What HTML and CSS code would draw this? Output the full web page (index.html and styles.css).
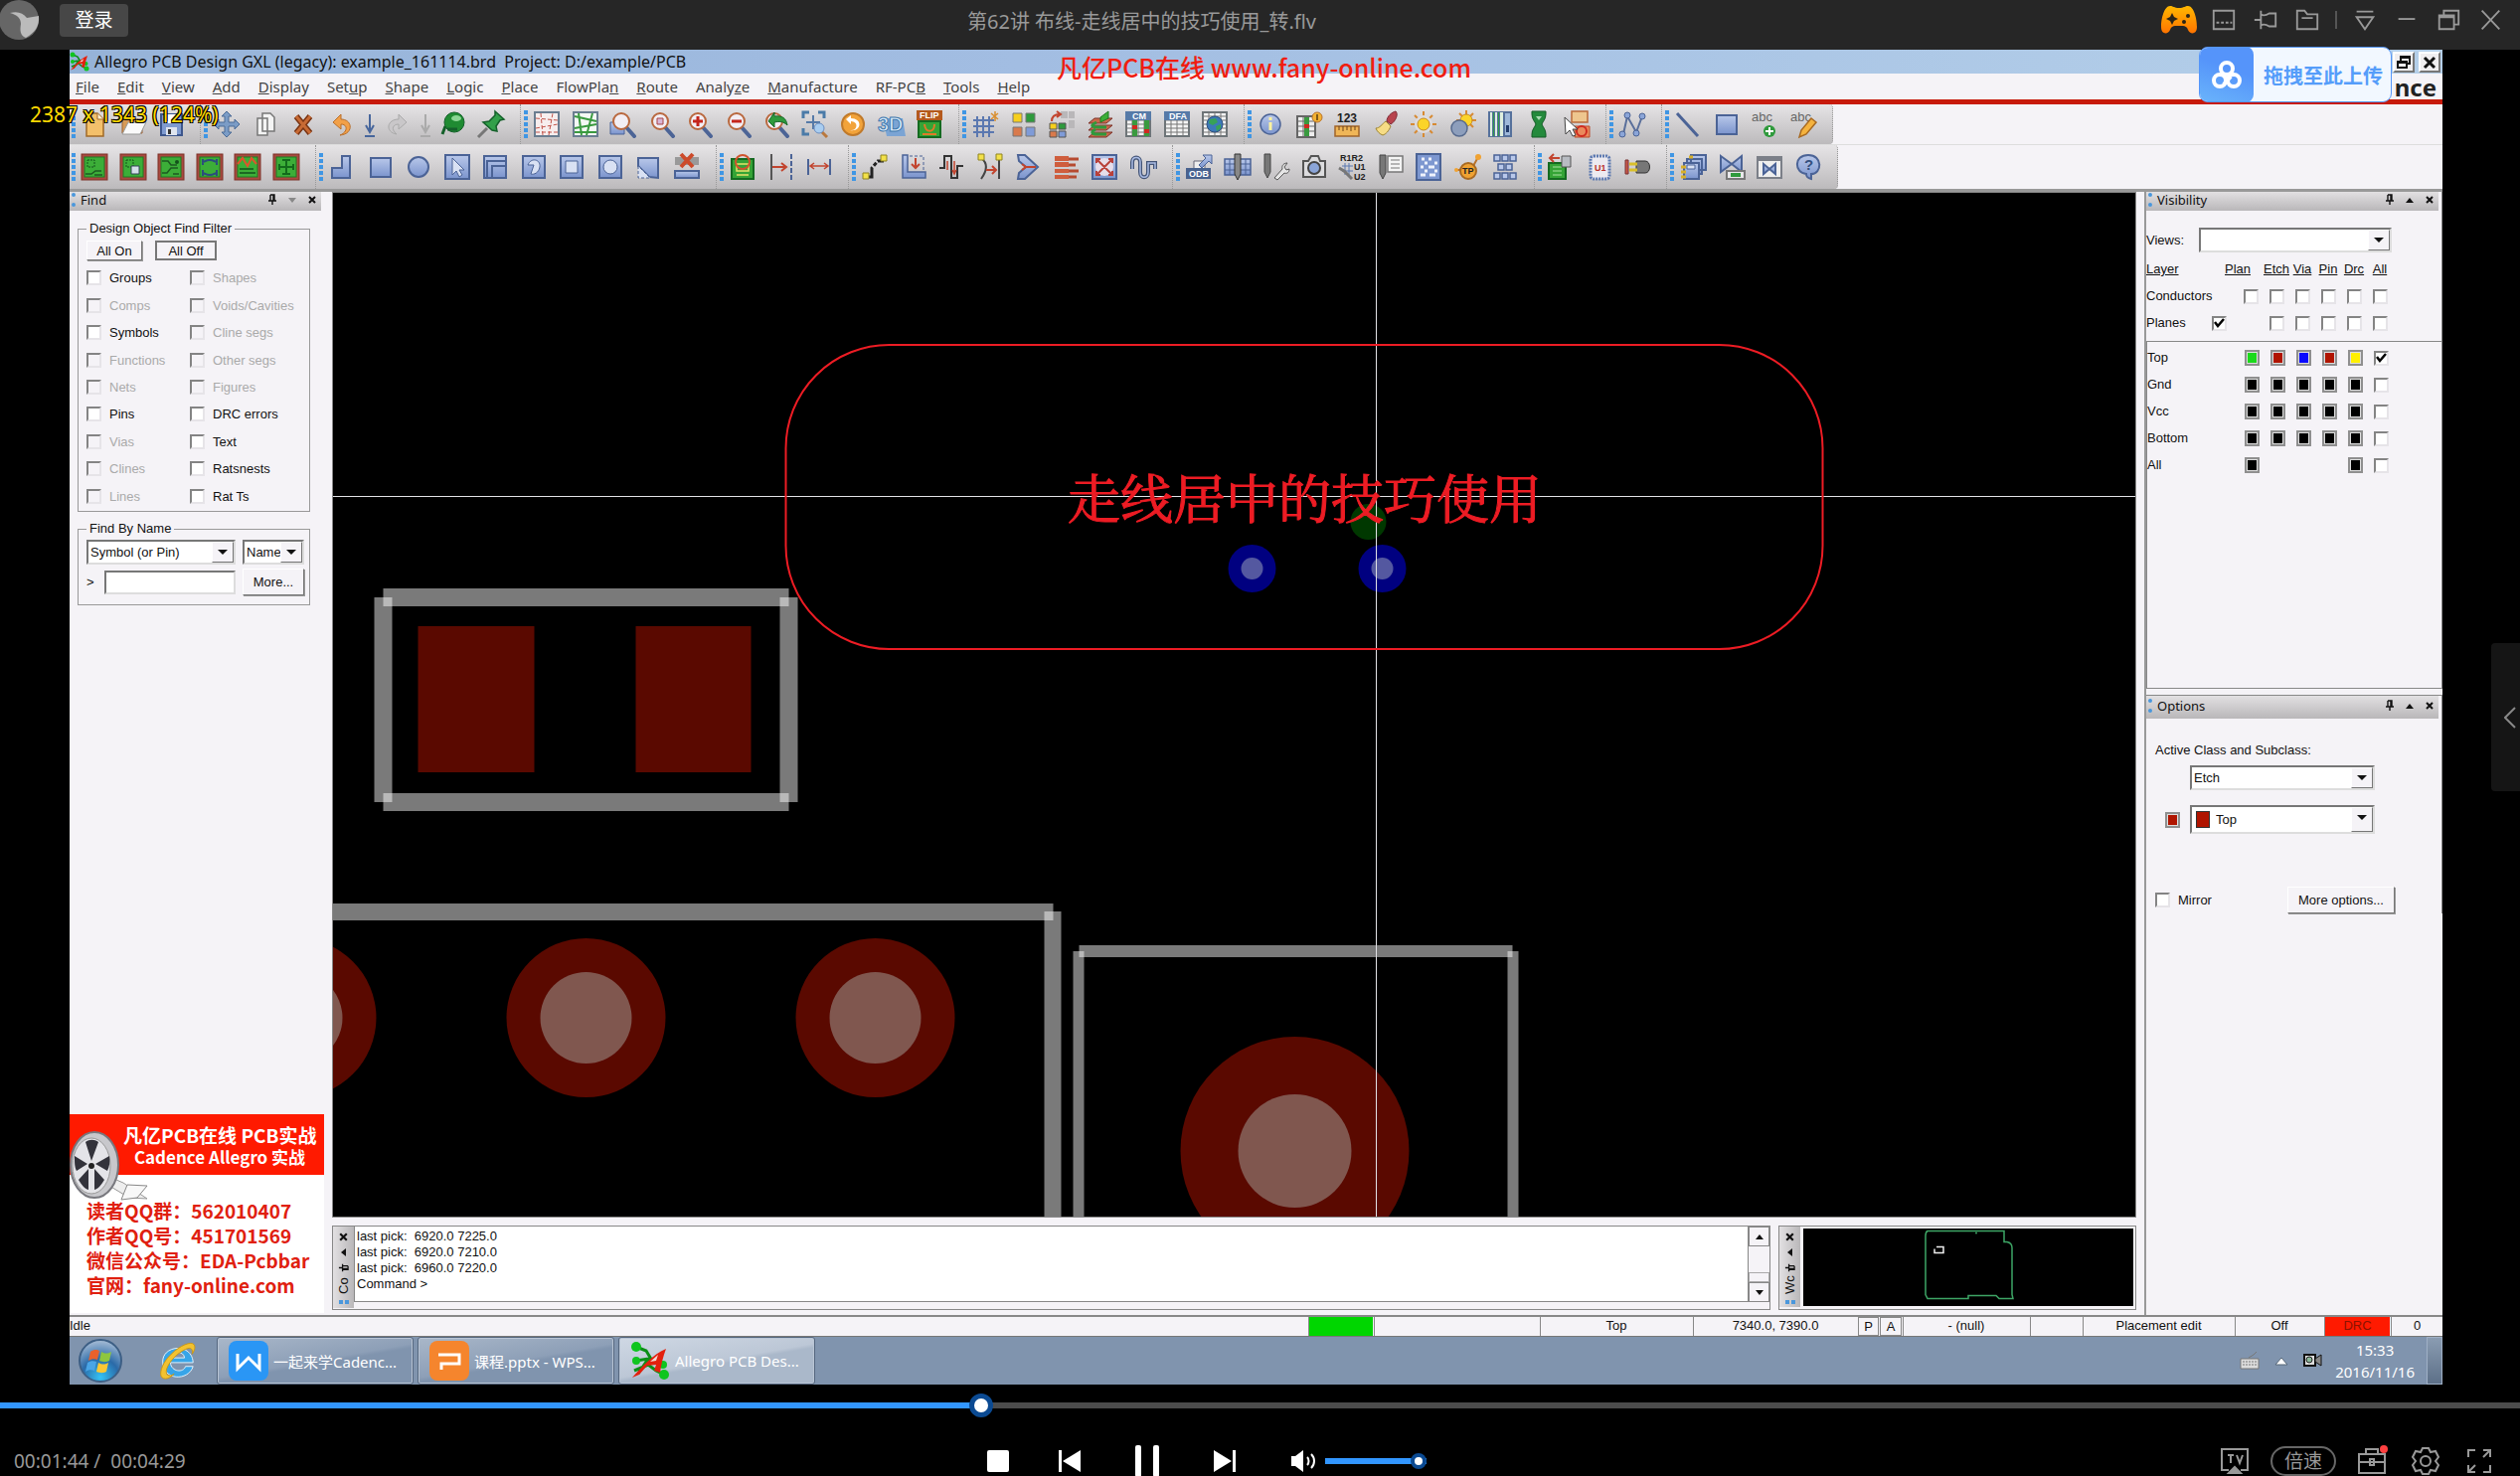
FILE: index.html
```html
<!DOCTYPE html>
<html lang="zh-CN">

<head>
    <meta charset="UTF-8">
    <title>第62讲 布线-走线居中的技巧使用_转.flv</title>
    <link rel="stylesheet" href="styles.css">
</head>

<body>

    <!-- shared icon parts -->
    <svg class="defs" aria-hidden="true">
        <defs>
            <linearGradient id="blue" x1="0" y1="0" x2="0" y2="1">
                <stop offset="0" stop-color="#b9c8ea" /><stop offset="1" stop-color="#7b94cd" />
            </linearGradient>
            <linearGradient id="game" x1="0" y1="0" x2="0" y2="1">
                <stop offset="0" stop-color="#ffb800" /><stop offset="1" stop-color="#ff7300" />
            </linearGradient>
            <radialGradient id="orb" cx="0.5" cy="0.9" r="0.9">
                <stop offset="0" stop-color="#35c3f5" /><stop offset="0.5" stop-color="#2a6aa8" /><stop offset="1" stop-color="#a9bed6" />
            </radialGradient>
        </defs>
        <symbol id="lens" viewBox="0 0 28 28">
            <path d="M17 17l8 9" stroke="#4c6496" stroke-width="4" stroke-linecap="round" />
            <circle cx="12" cy="11" r="8" fill="#f2eef4" stroke="#b9683e" stroke-width="2" />
        </symbol>
        <symbol id="board" viewBox="0 0 28 28">
            <rect x="1" y="1" width="26" height="26" fill="#a8493f" stroke="#7d3229" />
            <rect x="4" y="4" width="20" height="20" fill="#3cae38" stroke="#1f7a22" />
        </symbol>
        <symbol id="table" viewBox="0 0 28 28">
            <rect x="2" y="2" width="24" height="24" fill="#f4f4f4" stroke="#6d7478" stroke-width="2" />
            <path d="M2 10h24M2 14h24M2 18h24M2 22h24M8 8v18M14 8v18M20 8v18" stroke="#777" />
            <path d="M1 1h26v9H1z" fill="#567aa8" />
        </symbol>
        <symbol id="pin" viewBox="0 0 10 12">
            <path d="M3 1h4v6M3 1v6M1 7h8M5 7v4M6 1v6" stroke="#111" stroke-width="1.4" fill="none" />
        </symbol>
        <symbol id="allegro" viewBox="0 0 40 40">
            <path d="M6 6l10 4 6 10M6 20l12-2 10 4M4 30l14-6 8 6 8 4M8 33l8-12 12-2" stroke="#0b8f17" stroke-width="3" fill="none" />
            <circle cx="6" cy="6" r="5" fill="#0fc51f" /><circle cx="6" cy="20" r="4" fill="#0fc51f" />
            <circle cx="34" cy="34" r="5" fill="#0fc51f" /><circle cx="33" cy="24" r="4" fill="#0fc51f" />
            <path d="M2 37C12 26 22 14 36 8c-3 8-5 16-6 24l-6-2 2-6-9 1-8 9z" fill="#e3200e" />
            <path d="M20 21l8-7-2 6z" fill="#f3d9d4" />
        </symbol>
    </svg>

    <header class="player-bar">
        <div class="player-left">
            <svg class="avatar" viewBox="0 0 40 40">
                <circle cx="19" cy="20" r="20" fill="#666" />
                <path d="M10 13c8-2 13 0 17 5l12-2c1 10-4 17-13 22-6-2-6-8-5-14 0-6-4-9-11-11z" fill="#bbb" />
            </svg>
            <button class="login">登录</button>
        </div>
        <div class="player-title">第62讲 布线-走线居中的技巧使用_转.flv</div>
        <div class="player-tools">
            <button aria-label="游戏" class="game"><svg viewBox="0 0 38 30" width="38" height="30">
                <path d="M10 1c3 0 4 2 9 2s6-2 9-2c6 0 9 13 9 21 0 8-7 8-9 3-1-3-3-4-5-4h-8c-2 0-4 1-5 4-2 5-9 5-9-3C1 14 4 1 10 1z" fill="url(#game)" />
                <path d="M12 8l2 4 4 2-4 2-2 4-2-4-4-2 4-2z" fill="#2b2417" />
                <circle cx="28" cy="11" r="2" fill="#2b2417" /><circle cx="24" cy="17" r="2" fill="#2b2417" />
            </svg></button>
            <button aria-label="迷你模式"><svg viewBox="0 0 28 28"><path d="M3 4v20h22V4zM6 17h3M11 17h3M16 17h3M21 17h2" /></svg></button>
            <button aria-label="置顶"><svg viewBox="0 0 28 28"><path d="M2 14h7M9 4v20M9 8c3 2 6 1 9-1h7v14h-7c-3-2-6-3-9-1" /></svg></button>
            <button aria-label="文件夹"><svg viewBox="0 0 28 28"><path d="M3 24V4h8l3 4h11v16zM8 12h12" /></svg></button>
            <span class="divider"></span>
            <button aria-label="菜单"><svg viewBox="0 0 28 28"><path d="M5 5h18M5 11h18l-9 13z" /></svg></button>
            <button aria-label="最小化"><svg viewBox="0 0 28 28"><path d="M5 13h18" /></svg></button>
            <button aria-label="还原"><svg viewBox="0 0 28 28"><path d="M4 9h16v15H4zM4 11h16M9 9V4h16v15h-5" /></svg></button>
            <button aria-label="关闭"><svg viewBox="0 0 28 28"><path d="M5 4l19 20M24 4L5 24" /></svg></button>
        </div>
    </header>

    <main class="video">
        <div class="desktop">
            <div class="app-title">
                <svg class="app-icon"><use href="#allegro" /></svg>
                <span>Allegro PCB Design GXL (legacy): example_161114.brd&nbsp; Project: D:/example/PCB</span>
                <div class="mdi">
                    <button aria-label="Restore"><svg viewBox="0 0 16 16"><path d="M5 6V2h9v7h-3M2 7h9v6H2zM5 3h9M2 8h9" fill="none" stroke="#111" stroke-width="2" /></svg></button>
                    <button aria-label="Close"><svg viewBox="0 0 16 16"><path d="M3 3l10 10M13 3L3 13" stroke="#111" stroke-width="3" /></svg></button>
                </div>
                <div class="watermark">凡亿PCB在线 www.fany-online.com</div>
            </div>

            <nav class="menu">
                <a href="#"><u>F</u>ile</a>
                <a href="#"><u>E</u>dit</a>
                <a href="#"><u>V</u>iew</a>
                <a href="#"><u>A</u>dd</a>
                <a href="#"><u>D</u>isplay</a>
                <a href="#">Set<u>u</u>p</a>
                <a href="#"><u>S</u>hape</a>
                <a href="#"><u>L</u>ogic</a>
                <a href="#"><u>P</u>lace</a>
                <a href="#">FlowPla<u>n</u></a>
                <a href="#"><u>R</u>oute</a>
                <a href="#">Analy<u>z</u>e</a>
                <a href="#"><u>M</u>anufacture</a>
                <a href="#">RF-PC<u>B</u></a>
                <a href="#"><u>T</u>ools</a>
                <a href="#"><u>H</u>elp</a>
                <span class="brand">nce</span>
            </nav>

            <div class="toolbar">
                <div class="group">
                    <i class="grip"></i>
                    <button aria-label="New"><svg viewBox="0 0 28 28"><path d="M6 3h11l6 6v17H6z" fill="#f3c06b" stroke="#a06a28" stroke-width="1.5" /><path d="M17 3v6h6" fill="#fff0cf" stroke="#a06a28" /></svg></button>
                    <button aria-label="Open"><svg viewBox="0 0 28 28"><path d="M3 23V6h8l2 3h10v14z" fill="#d79a56" stroke="#9b6132" /><path d="M3 24l6-12h18l-6 12z" fill="#fafafa" stroke="#999" /></svg></button>
                    <button aria-label="Save"><svg viewBox="0 0 28 28"><path d="M4 4h21v21H4z" fill="#7f9bd0" stroke="#3d568c" stroke-width="2" /><path d="M8 4h13v9H8z" fill="#fff" /><path d="M9 17h11v8H9z" fill="#dfe5ef" /><path d="M11 19h3v5h-3z" fill="#333" /></svg></button>
                </div>
                <div class="group">
                    <i class="grip"></i>
                    <button aria-label="Move"><svg viewBox="0 0 28 28"><path d="M14 1l5 5h-3v6h6V9l5 5-5 5v-3h-6v6h3l-5 5-5-5h3v-6H6v3l-5-5 5-5v3h6V6H9z" fill="#7b9cc6" stroke="#4b6b96" /></svg></button>
                    <button aria-label="Copy"><svg viewBox="0 0 28 28"><path d="M6 8h10v17H6zM11 3h8l4 4v14H11z" fill="#f4f4f4" stroke="#777" stroke-width="1.5" /></svg></button>
                    <button aria-label="Delete"><svg viewBox="0 0 28 28"><path d="M7 6l14 17M21 6L7 23" stroke="#7a3514" stroke-width="6" /><path d="M7 6l14 17M21 6L7 23" stroke="#c86a34" stroke-width="3" /></svg></button>
                    <button aria-label="Undo"><svg viewBox="0 0 28 28"><path d="M12 25c14-1 13-16 1-16V4l-8 8 8 7v-5c7 0 7 8-1 11z" fill="#f2a048" stroke="#b96f2b" /></svg></button>
                    <button aria-label="Undo list" class="drop"><svg viewBox="0 0 14 28"><path d="M7 4v18M3 15l4 7 4-7M2 26h10" stroke="#47669c" stroke-width="2" fill="none" /></svg></button>
                    <button aria-label="Redo"><svg viewBox="0 0 28 28"><path d="M13 24C1 22 3 9 15 9V4l8 8-8 7v-5c-6 0-8 5-2 10z" fill="#c9c7c9" stroke="#aaa" /></svg></button>
                    <button aria-label="Redo list" class="drop"><svg viewBox="0 0 14 28"><path d="M7 4v18M3 15l4 7 4-7M2 26h10" stroke="#aaa" stroke-width="2" fill="none" /></svg></button>
                    <button aria-label="Pan"><svg viewBox="0 0 28 28"><circle cx="15" cy="12" r="10" fill="#1f8b32" stroke="#14602a" /><path d="M6 16l-3 8M8 19h10" stroke="#14602a" stroke-width="3" /><ellipse cx="17" cy="8" rx="5" ry="3" fill="#8bd694" /></svg></button>
                    <button aria-label="Pin"><svg viewBox="0 0 28 28"><path d="M10 18l-9 9" stroke="#777" stroke-width="3" /><path d="M18 1l9 8-4 1-4 6 1 5-5-1-9-8 6-1 6-6z" fill="#33a04a" stroke="#14602a" stroke-width="1.5" /></svg></button>
                </div>
                <div class="group">
                    <i class="grip"></i>
                    <button aria-label="Unrats all"><svg viewBox="0 0 28 28"><rect x="2" y="2" width="24" height="24" fill="#f7eeee" stroke="#6a7d90" stroke-width="2" /><path d="M3 8l22 2M3 18l22-4M8 3l2 22M16 25l4-22M3 22h22" stroke="#c2544a" stroke-dasharray="4 2" fill="none" /></svg></button>
                    <button aria-label="Rats all"><svg viewBox="0 0 28 28"><rect x="2" y="2" width="24" height="24" fill="#f4f8f4" stroke="#6a7d90" stroke-width="2" /><path d="M3 6l22 5M3 18l22-4M7 3l3 22M15 25l6-22M3 22h22" stroke="#3a9a3f" stroke-width="2" fill="none" /></svg></button>
                    <button aria-label="Zoom window"><svg viewBox="0 0 28 28"><path d="M1 12h14v12H1z" fill="url(#blue)" stroke="#4b6396" /><use href="#lens" /></svg></button>
                    <button aria-label="Zoom fit"><svg viewBox="0 0 28 28"><use href="#lens" /><path d="M9 8h6v6H9z" fill="#d8b6d6" stroke="#a84343" /></svg></button>
                    <button aria-label="Zoom in"><svg viewBox="0 0 28 28"><use href="#lens" /><path d="M12 6v10M7 11h10" stroke="#c5241b" stroke-width="3" /></svg></button>
                    <button aria-label="Zoom out"><svg viewBox="0 0 28 28"><use href="#lens" /><path d="M7 11h10" stroke="#c5241b" stroke-width="3" /></svg></button>
                    <button aria-label="Zoom previous"><svg viewBox="0 0 28 28"><use href="#lens" /><path d="M6 11l6-9v4c8-1 12 2 13 9-4-4-8-4-13-3v5z" fill="#2e9a3c" stroke="#17662a" /></svg></button>
                    <button aria-label="Zoom world"><svg viewBox="0 0 28 28"><path d="M2 8V2h6M17 2h6v6M2 18v6h6" stroke="#4b7ba8" stroke-width="3" fill="none" /><path d="M12 5v14M5 12h14" stroke="#567aa8" stroke-width="2" /><path d="M20 21l6 6" stroke="#b9783e" stroke-width="3" /><circle cx="18" cy="18" r="5" fill="#a9cdf0" stroke="#6b8dc0" /></svg></button>
                    <button aria-label="Refresh"><svg viewBox="0 0 28 28"><circle cx="14" cy="14" r="11" fill="#f2a33a" stroke="#c07a2b" stroke-width="2" /><path d="M11 20c8 1 9-9 1-9v3L7 9l5-4v3c12 0 11 14-1 12z" fill="#fff" /></svg></button>
                    <button aria-label="3D"><svg viewBox="0 0 28 28"><path d="M5 8h20l3 18H9z" fill="#7ba4d4" /><text x="0" y="21" class="t3d">3D</text></svg></button>
                    <button aria-label="Flip"><svg viewBox="0 0 28 28"><path d="M3 11h22v16H3z" fill="#35a436" stroke="#146a20" stroke-width="2" /><path d="M9 14c1 9 10 9 10 0M7 24h14" stroke="#e07a28" stroke-width="2" fill="none" /><path d="M1 0h26v10H1z" fill="#b4591c" /><text x="4" y="8" class="tiny light">FLIP</text></svg></button>
                </div>
                <div class="group">
                    <i class="grip"></i>
                    <button aria-label="Grid toggle"><svg viewBox="0 0 28 28"><path d="M6 6v21M12 6v21M18 6v21M2 10h21M2 16h21M2 22h21" stroke="#5b78b0" stroke-width="2" /><path d="M24 1v10M20 3l7 6M27 3l-7 6" stroke="#d98e2e" stroke-width="1.5" /></svg></button>
                    <button aria-label="Color"><svg viewBox="0 0 28 28"><path d="M3 3h9v9H3z" fill="#f6cf1d" stroke="#777" /><path d="M16 3h9v9h-9z" fill="#2e9a3c" stroke="#777" /><path d="M3 17h9v9H3z" fill="#d97a4c" stroke="#777" /><path d="M16 17h9v9h-9z" fill="#7f9bd8" stroke="#777" /></svg></button>
                    <button aria-label="Color last"><svg viewBox="0 0 28 28"><path d="M13 1h7v7h-7zM21 1h6v7h-6zM21 10h6v8h-6z" fill="#b9b7b9" /><path d="M2 13h7v6H2z" fill="#f6cf1d" stroke="#555" /><path d="M11 13h7v6h-7z" fill="#2e9a3c" stroke="#555" /><path d="M2 21h7v6H2z" fill="#d97a4c" stroke="#555" /><path d="M11 21h7v6h-7z" fill="#7f9bd8" stroke="#555" /><path d="M4 11c0-5 3-7 8-7M9 1l4 3-4 3" stroke="#c2442e" stroke-width="2" fill="none" /></svg></button>
                    <button aria-label="Layers"><svg viewBox="0 0 28 28"><path d="M8 8h18l-6 5H2zM8 15h18l-6 5H2zM8 22h18l-6 5H2z" fill="#c9694a" stroke="#7d3229" /><path d="M10 12c-6 3-6 5 2 5h8M9 19c-5 3-4 5 2 5h9" stroke="#2f9a3c" stroke-width="3" fill="none" /><path d="M14 7l8-6v7l-8 4z" fill="#3cae38" stroke="#1f7a22" /></svg></button>
                    <button aria-label="Constraint manager"><svg viewBox="0 0 28 28"><use href="#table" /><path d="M8 10h5v16H8zM20 10h5v16h-5z" fill="#3a9a3f" /><path d="M8 15h5v4H8zM20 19h5v4h-5z" fill="#cf2a20" /><text x="8" y="9" class="tiny light">CM</text></svg></button>
                    <button aria-label="DFA"><svg viewBox="0 0 28 28"><use href="#table" /><text x="6" y="9" class="tiny light">DFA</text></svg></button>
                    <button aria-label="World"><svg viewBox="0 0 28 28"><rect x="2" y="2" width="24" height="24" fill="#f4f4f4" stroke="#6d7478" stroke-width="2" /><path d="M2 6h24M2 10h24M2 14h24M2 18h24M2 22h24M8 2v24M14 2v24M20 2v24" stroke="#777" /><circle cx="14" cy="14" r="8" fill="#3c79b8" stroke="#2c4f7c" /><path d="M9 9l6-1 2 4-5 3-4-2zM15 16l5-2v4l-4 3z" fill="#37a257" /></svg></button>
                </div>
                <div class="group">
                    <i class="grip"></i>
                    <button aria-label="Show element"><svg viewBox="0 0 28 28"><circle cx="14" cy="14" r="10" fill="url(#blue)" stroke="#4b6396" stroke-width="1.5" /><path d="M14 12v8M14 7v3" stroke="#fff3a0" stroke-width="3" /></svg></button>
                    <button aria-label="Constraint info"><svg viewBox="0 0 28 28"><path d="M2 6h18v21H2z" fill="#eee" stroke="#666" stroke-width="2" /><path d="M2 11h18M2 16h18M2 21h18M8 6v21" stroke="#666" /><path d="M9 7h5v19H9z" fill="#3a9a3f" /><path d="M9 14h5v4H9z" fill="#cf2a20" /><circle cx="22" cy="7" r="5" fill="#f3b232" stroke="#b9732b" /><path d="M22 4v6" stroke="#5a3b10" stroke-width="1.5" /></svg></button>
                    <button aria-label="Measure"><svg viewBox="0 0 28 28"><text x="4" y="12" class="num">123</text><path d="M2 16h24v10H2z" fill="#f0b657" stroke="#a0642a" stroke-width="1.5" /><path d="M6 16v4M10 16v5M14 16v4M18 16v5M22 16v4" stroke="#6a4318" /></svg></button>
                    <button aria-label="Dehighlight"><svg viewBox="0 0 28 28"><path d="M15 11c0-5 5-9 9-10 3 3 0 10-5 13z" fill="#b8434d" stroke="#7d2a35" /><path d="M4 18c4 0 6-4 10-7l5 5c-2 5-5 8-8 9-3-1-6-4-7-7z" fill="#f6dc85" stroke="#9e8431" /></svg></button>
                    <button aria-label="Highlight"><svg viewBox="0 0 28 28"><path d="M14 1v26M1 14h26M5 5l18 18M23 5L5 23" stroke="#d78a33" stroke-width="2" /><circle cx="14" cy="14" r="9" fill="#dedcde" /><circle cx="14" cy="14" r="6" fill="#fbd429" stroke="#c78b21" /></svg></button>
                    <button aria-label="Shadow"><svg viewBox="0 0 28 28"><path d="M18 0v22M8 10h20M11 3l14 14M25 3L11 17" stroke="#d78a33" stroke-width="2" /><circle cx="18" cy="10" r="6" fill="#fbd429" stroke="#c78b21" /><circle cx="11" cy="18" r="8" fill="#8d9ebc" stroke="#566a8e" stroke-width="1.5" /></svg></button>
                    <button aria-label="Layer bars"><svg viewBox="0 0 28 28"><path d="M2 1h24v26H2z" fill="#56719c" /><path d="M4 2h2v24H4zM9 2h2v24H9zM14 2h3v24h-3z" fill="#dff0df" /><path d="M7 2h1v24H7zM12 2h1v24h-1z" fill="#2f9a4a" /><path d="M19 3h5v22h-5z" fill="#9eb8da" /><path d="M20 15h3v7h-3z" fill="#223c6b" /></svg></button>
                    <button aria-label="Waive DRC"><svg viewBox="0 0 28 28"><path d="M7 1h14v3c0 5-3 7-4 10 1 3 4 5 4 10v3H7v-3c0-5 3-7 4-10-1-3-4-5-4-10z" fill="#248a3c" stroke="#145c27" /><path d="M11 6h6l-3 4z" fill="#a7dab0" /></svg></button>
                    <button aria-label="Select filter"><svg viewBox="0 0 28 28"><path d="M9 1h16v11H9z" fill="#eec68e" stroke="#bb6a3a" stroke-width="1.5" /><path d="M12 16h15v11H12z" fill="#ea8a5c" stroke="#bb4a2a" /><circle cx="19" cy="21" r="5" fill="none" stroke="#cf2a20" stroke-width="2" /><path d="M2 7l1 17 4-4 3 6 3-1-3-6h5z" fill="#fff" stroke="#444" /></svg></button>
                </div>
                <div class="group">
                    <i class="grip"></i>
                    <button aria-label="Net schedule"><svg viewBox="0 0 28 28"><path d="M5 24L9 6l9 16 6-16" fill="none" stroke="#5a6f9b" stroke-width="2" /><g fill="#8ba5d8" stroke="#4b6396"><circle cx="4" cy="24" r="3" /><circle cx="9" cy="5" r="3" /><circle cx="18" cy="23" r="3" /><circle cx="24" cy="6" r="3" /></g></svg></button>
                </div>
                <div class="group">
                    <i class="grip"></i>
                    <button aria-label="Line"><svg viewBox="0 0 28 28"><path d="M3 3l21 23" stroke="#4b6396" stroke-width="3" /></svg></button>
                    <button aria-label="Rectangle"><svg viewBox="0 0 28 28"><path d="M4 5h20v19H4z" fill="url(#blue)" stroke="#4b6396" stroke-width="2" /></svg></button>
                    <button aria-label="Add text"><svg viewBox="0 0 28 28"><text x="1" y="11" class="abc">abc</text><circle cx="19" cy="21" r="6" fill="#2f9a3c" /><path d="M19 17v8M15 21h8" stroke="#fff" stroke-width="2" /></svg></button>
                    <button aria-label="Edit text"><svg viewBox="0 0 28 28"><text x="1" y="11" class="abc">abc</text><path d="M10 27l2-7L22 8l5 4-10 12z" fill="#f5b33e" stroke="#a86a22" stroke-width="1.5" /></svg></button>
                </div>
            </div>

            <div class="toolbar">
                <div class="group">
                    <i class="grip"></i>
                    <button aria-label="General edit"><svg viewBox="0 0 28 28"><use href="#board" /><path d="M7 7h7v7H7z" stroke="#12521b" stroke-dasharray="2 1" fill="none" /><path d="M5 21h6l4-3h6M14 22h8" stroke="#1c5a20" stroke-width="1.5" fill="none" /></svg></button>
                    <button aria-label="Placement edit"><svg viewBox="0 0 28 28"><use href="#board" /><path d="M7 7h7v7H7z" stroke="#12521b" stroke-dasharray="2 1" fill="none" /><path d="M12 13h8v8h-8z" fill="#d4dfe8" stroke="#345" /></svg></button>
                    <button aria-label="Etch edit"><svg viewBox="0 0 28 28"><use href="#board" /><path d="M5 8h6l3 4h6M5 20h5l4-5h7M16 21h6" stroke="#1c5a20" stroke-width="1.5" fill="none" /><circle cx="20" cy="9" r="2" fill="#12521b" /></svg></button>
                    <button aria-label="Flow edit"><svg viewBox="0 0 28 28"><use href="#board" /><path d="M6 9c4 0 3-2 8-2s4 2 8 2M6 20c4 0 3 2 8 2s4-2 8-2M7 6v6M21 6v6M7 17v6M21 17v6" stroke="#2b4d7c" stroke-width="2" fill="none" /></svg></button>
                    <button aria-label="Signal edit"><svg viewBox="0 0 28 28"><use href="#board" /><path d="M4 11l5-6 5 8 4-8 5 6" stroke="#e0532c" stroke-width="2" fill="none" /><path d="M6 16h14M6 20h16" stroke="#12521b" stroke-width="1.5" /></svg></button>
                    <button aria-label="RF edit"><svg viewBox="0 0 28 28"><use href="#board" /><path d="M10 7h8M14 7v14M10 21h8M7 11v6M21 11v6M7 14h14" stroke="#126a1b" stroke-width="2" fill="none" /></svg></button>
                </div>
                <div class="group blue">
                    <i class="grip"></i>
                    <button aria-label="Polygon"><svg viewBox="0 0 28 28"><path d="M14 3h8v22H4V15h10z" /></svg></button>
                    <button aria-label="Shape rectangle"><svg viewBox="0 0 28 28"><path d="M4 5h20v19H4z" /></svg></button>
                    <button aria-label="Shape circle"><svg viewBox="0 0 28 28"><circle cx="14" cy="14" r="10" /></svg></button>
                    <button aria-label="Shape select"><svg viewBox="0 0 28 28"><path d="M2 2h24v24H2z" /><path d="M9 5v17l4-4 3 6 3-2-3-5h5z" class="pale" /></svg></button>
                    <button aria-label="Shape path"><svg viewBox="0 0 28 28"><path d="M3 3h22v22H3z" /><path d="M6 24V8h18M11 24V13h13" class="line" /></svg></button>
                    <button aria-label="Void polygon"><svg viewBox="0 0 28 28"><path d="M3 3h22v22H3z" /><path d="M8 12c3-8 13-6 12 2-1 6-6 8-9 7l3-9z" class="pale" /></svg></button>
                    <button aria-label="Void rectangle"><svg viewBox="0 0 28 28"><path d="M3 3h22v22H3z" /><path d="M8 8h12v12H8z" class="pale" /></svg></button>
                    <button aria-label="Void circle"><svg viewBox="0 0 28 28"><path d="M3 3h22v22H3z" /><circle cx="14" cy="14" r="7" class="pale" /></svg></button>
                    <button aria-label="Void delete"><svg viewBox="0 0 28 28"><path d="M4 5h20v20l-9-1-11-11z" /><path d="M4 13v12h12z" class="pale dash" /></svg></button>
                    <button aria-label="Island delete"><svg viewBox="0 0 28 28"><path d="M2 4h24v8H2z" fill="#999" stroke="none" /><path d="M2 18h24v7H2z" /><path d="M8 1l12 13M20 1L8 14" stroke="#cc4a2a" stroke-width="4" /></svg></button>
                </div>
                <div class="group">
                    <i class="grip"></i>
                    <button aria-label="DRC board"><svg viewBox="0 0 28 28"><path d="M3 6h22v20H3z" fill="#35a436" stroke="#146a20" stroke-width="2" /><path d="M8 22h12M8 11h12v7H8z" stroke="#e8e26a" stroke-width="1.5" fill="none" /><circle cx="14" cy="9" r="7" fill="none" stroke="#d0532c" stroke-width="2" /></svg></button>
                    <button aria-label="Spacing"><svg viewBox="0 0 28 28"><path d="M4 1v26" stroke="#555" stroke-width="2" /><path d="M24 1v26" stroke="#4b6396" stroke-width="2" stroke-dasharray="5 2" /><path d="M5 14h13M14 10l5 4-5 4" stroke="#c2442e" stroke-width="2" fill="none" /></svg></button>
                    <button aria-label="Dimension"><svg viewBox="0 0 28 28"><path d="M3 6v16M25 6v16" stroke="#4b6396" stroke-width="2" /><path d="M5 13h18M9 10l-4 3 4 3M19 10l4 3-4 3" stroke="#c2442e" stroke-width="1.5" fill="none" /></svg></button>
                </div>
                <div class="group">
                    <i class="grip"></i>
                    <button aria-label="Add connect"><svg viewBox="0 0 28 28"><path d="M5 24h6v-9l6-7h6" stroke="#222" stroke-width="3" stroke-dasharray="16 2 4 2" fill="none" /><path d="M2 20h6v6H2zM20 2h6v6h-6z" fill="#f3e14a" stroke="#8f8420" /></svg></button>
                    <button aria-label="Slide"><svg viewBox="0 0 28 28"><path d="M3 2h5v17h18v6H3z" fill="url(#blue)" stroke="#4b6396" stroke-width="1.5" /><path d="M10 3h14v14" stroke="#4b6396" stroke-dasharray="3 2" fill="none" /><path d="M16 5v9M12 11l4 4 4-4" stroke="#c2442e" stroke-width="2" fill="none" /></svg></button>
                    <button aria-label="Delay tune"><svg viewBox="0 0 28 28"><path d="M2 15h5V3h7v22h6V13h6" stroke="#333" stroke-width="2" fill="none" /><path d="M10 17V8M17 8v12M15 17l2 4 2-4" stroke="#c2442e" stroke-width="1.5" fill="none" /></svg></button>
                    <button aria-label="Custom smooth"><svg viewBox="0 0 28 28"><path d="M5 5c8 6 5 14 0 21M23 6v20" stroke="#444" stroke-width="2" fill="none" /><path d="M10 17h9M16 13l4 4-4 4" stroke="#c2442e" stroke-width="2" fill="none" /><path d="M2 1h6v6H2zM20 1h6v6h-6z" fill="#f3e14a" stroke="#8f8420" /></svg></button>
                    <button aria-label="Fanout"><svg viewBox="0 0 28 28"><path d="M4 2h7l13 12-13 12H4l1-6 7-6-7-6z" fill="url(#blue)" stroke="#4b6396" stroke-width="2" /><path d="M10 14h12M8 11l4 3-4 3" stroke="#c2442e" stroke-width="2" fill="none" /></svg></button>
                    <button aria-label="Spread"><svg viewBox="0 0 28 28"><path d="M2 3h14v5H2zM2 9h14v5H2zM2 16h14v4H2zM2 22h14v4H2z" fill="#cf5d3d" /><path d="M16 6h10M16 12h7M16 18h10M16 24h8" stroke="#b64a30" stroke-width="3" /></svg></button>
                    <button aria-label="Auto route"><svg viewBox="0 0 28 28"><path d="M2 2h24v24H2z" fill="url(#blue)" stroke="#4b6396" stroke-width="2" /><circle cx="14" cy="14" r="9" fill="#e7ddea" /><path d="M6 6l16 16M22 6L6 22M6 10V6h4M18 6h4v4M6 18v4h4M18 22h4v-4" stroke="#b8403a" stroke-width="2" fill="none" /></svg></button>
                    <button aria-label="Phase tune"><svg viewBox="0 0 28 28"><path d="M3 16V9c0-6 8-6 8 0v10c0 7 8 7 8 0v-9h7v6" stroke="#445577" stroke-width="4" fill="none" /><path d="M3 16V9c0-6 8-6 8 0v10c0 7 8 7 8 0v-9h7v6" stroke="#aabce4" stroke-width="1.5" fill="none" /></svg></button>
                </div>
                <div class="group">
                    <i class="grip"></i>
                    <button aria-label="ODB"><svg viewBox="0 0 28 28"><path d="M9 8h11v8H9z" fill="#eee" stroke="#667" /><path d="M14 12l7-7-3-3h9v9l-3-3-7 7z" fill="url(#blue)" stroke="#4b6396" /><path d="M1 15h25v11H1z" fill="#48628f" /><text x="4" y="24" class="tiny light">ODB</text></svg></button>
                    <button aria-label="NC drill"><svg viewBox="0 0 28 28"><path d="M1 6h26v16H1z" fill="url(#blue)" stroke="#4b6396" stroke-width="1.5" /><path d="M1 11h26M1 17h26M6 6v16M22 6v16" stroke="#4b6396" /><path d="M11 1h6v20l-3 6-3-6z" fill="#888" stroke="#333" /></svg></button>
                    <button aria-label="Drill setup"><svg viewBox="0 0 28 28"><path d="M3 1h6v18l-3 6-3-6z" fill="#777" stroke="#444" /><path d="M13 25l8-9c-1-4 2-6 5-6l-3 4 2 3 3-1c0 4-3 5-5 4l-7 7z" fill="#e6e6e6" stroke="#555" /></svg></button>
                    <button aria-label="Artwork"><svg viewBox="0 0 28 28"><path d="M3 8h5l3-5h7l2 5h5v16H3z" fill="#dcdcde" stroke="#555" stroke-width="2" /><circle cx="14" cy="15" r="6" fill="#8ba5d8" stroke="#444" stroke-width="2" /></svg></button>
                    <button aria-label="Rename refdes"><svg viewBox="0 0 28 28"><text x="2" y="8" class="tiny">R1R2</text><text x="16" y="17" class="tiny">U1</text><text x="16" y="27" class="tiny">U2</text><path d="M7 10v12M11 10v12M4 13h11M4 18h11" stroke="#5b78b0" /><path d="M1 15l5 3 8 8" stroke="#777" stroke-width="3" fill="none" /></svg></button>
                    <button aria-label="Drill legend"><svg viewBox="0 0 28 28"><path d="M3 2h6v18l-3 6-3-6z" fill="#777" stroke="#444" /><path d="M11 3h15v16H11z" fill="#f4f4f4" stroke="#777" stroke-width="1.5" /><path d="M14 7h9M14 11h9M14 15h9" stroke="#777" /></svg></button>
                    <button aria-label="Thieving"><svg viewBox="0 0 28 28"><path d="M2 1h24v26H2z" fill="#7d97d0" stroke="#4b6396" stroke-width="2" /><path d="M7 6h3M14 6h3M10 10h3M20 10h3M6 14h3M14 14h6M10 18h3M20 18h3M6 22h5M15 22h6" stroke="#eef2fb" stroke-width="3" /></svg></button>
                    <button aria-label="Testprep"><svg viewBox="0 0 28 28"><path d="M2 17h8M20 13l5-9" stroke="#b9732b" stroke-width="2" /><circle cx="3" cy="17" r="2" fill="#f0a232" /><circle cx="25" cy="4" r="3" fill="#f0a232" /><circle cx="15" cy="18" r="8" fill="#f0a232" stroke="#a86a22" stroke-width="2" /><text x="9" y="21" class="tiny">TP</text></svg></button>
                    <button aria-label="Panelize"><svg viewBox="0 0 28 28"><g fill="#b9c8ea" stroke="#4b6396" stroke-width="1.5"><path d="M3 2h6v6H3zM11 2h6v6h-6zM19 2h6v6h-6zM7 11h6v6H7zM15 11h6v6h-6zM3 20h6v6H3zM11 20h6v6h-6zM19 20h6v6h-6z" /></g></svg></button>
                </div>
                <div class="group">
                    <i class="grip"></i>
                    <button aria-label="Place manual"><svg viewBox="0 0 28 28"><path d="M2 10h17v16H2z" fill="#35a436" stroke="#146a20" stroke-width="2" /><path d="M6 14h9M6 18h9M6 22h9" stroke="#a9e0a0" /><path d="M15 3h9v11h-9z" fill="#b8bcc2" stroke="#555" /><path d="M13 5H4M7 1L3 5l4 4" stroke="#c2442e" stroke-width="2" fill="none" /></svg></button>
                    <button aria-label="Place component"><svg viewBox="0 0 28 28"><rect x="5" y="3" width="19" height="23" rx="3" fill="#eceaf0" stroke="#5b78b0" stroke-width="3" stroke-dasharray="2 1" /><text x="9" y="18" class="tiny red">U1</text></svg></button>
                    <button aria-label="Swap"><svg viewBox="0 0 28 28"><path d="M13 8h9c6 0 6 12 0 12h-9z" fill="#777" stroke="#333" /><path d="M2 7h3v14H2z" fill="#c9574a" stroke="#733" /><path d="M6 11h8M6 17h8" stroke="#d9c02a" stroke-width="3" /></svg></button>
                </div>
                <div class="group blue">
                    <i class="grip"></i>
                    <button aria-label="Reports"><svg viewBox="0 0 28 28"><path d="M12 2h15v15H12zM8 6h15v15H8z" /><path d="M5 10h15v16H5z" /><path d="M8 12h8v4H8z" class="pale" /><path d="M2 14h5M2 19h5M2 24h5M10 4h4" stroke="#d8b02a" stroke-width="3" /></svg></button>
                    <button aria-label="Update"><svg viewBox="0 0 28 28"><path d="M3 3l11 8 10-8v16l-10-8-11 8z" /><path d="M9 18h18v8H9z" fill="#e8e8ea" stroke="#777" /><path d="M13 22h10" stroke="#2f9a3c" stroke-width="4" /></svg></button>
                    <button aria-label="Status"><svg viewBox="0 0 28 28"><path d="M2 4h24v21H2z" fill="#eee" stroke="#7b7f88" /><path d="M2 6h24" stroke="#7b7f88" stroke-width="4" /><path d="M8 11l6 5 6-5v10l-6-5-6 5z" /></svg></button>
                    <button aria-label="Help"><svg viewBox="0 0 28 28"><path d="M14 2c15 0 14 19 3 19v5c-4-1-5-2-5-5C0 20-1 2 14 2z" /><text x="10" y="17" class="ask">?</text></svg></button>
                </div>
            </div>

            <div class="workspace">
                <aside class="left">
                    <div class="panel-head">
                        <span>Find</span>
                        <svg><use href="#pin" /></svg><b class="down dim"></b><svg viewBox="0 0 10 10"><path d="M2 2l6 6M8 2L2 8" stroke="#111" stroke-width="2" /></svg>
                    </div>
                    <fieldset class="filter">
                        <legend>Design Object Find Filter</legend>
                        <div class="filter-buttons">
                            <button class="btn">All On</button>
                            <button class="btn focus">All Off</button>
                        </div>
                        <div class="checks">
                            <label><input type="checkbox">Groups</label>
                            <label class="off"><input type="checkbox" disabled>Shapes</label>
                            <label class="off"><input type="checkbox" disabled>Comps</label>
                            <label class="off"><input type="checkbox" disabled>Voids/Cavities</label>
                            <label><input type="checkbox">Symbols</label>
                            <label class="off"><input type="checkbox" disabled>Cline segs</label>
                            <label class="off"><input type="checkbox" disabled>Functions</label>
                            <label class="off"><input type="checkbox" disabled>Other segs</label>
                            <label class="off"><input type="checkbox" disabled>Nets</label>
                            <label class="off"><input type="checkbox" disabled>Figures</label>
                            <label><input type="checkbox">Pins</label>
                            <label><input type="checkbox">DRC errors</label>
                            <label class="off"><input type="checkbox" disabled>Vias</label>
                            <label><input type="checkbox">Text</label>
                            <label class="off"><input type="checkbox" disabled>Clines</label>
                            <label><input type="checkbox">Ratsnests</label>
                            <label class="off"><input type="checkbox" disabled>Lines</label>
                            <label><input type="checkbox">Rat Ts</label>
                        </div>
                    </fieldset>
                    <fieldset class="by-name">
                        <legend>Find By Name</legend>
                        <span class="combo"><select aria-label="Find type"><option>Symbol (or Pin)</option></select></span>
                        <span class="combo"><select aria-label="Match by"><option>Name</option></select></span>
                        <label class="name-field">&gt;<input type="text"></label>
                        <button class="btn">More...</button>
                    </fieldset>
                    <div class="promo">
                        <svg class="reel" viewBox="0 0 80 78">
                            <path d="M40 54l14 6 24 16-18-1-20-12z" fill="#eee" stroke="#999" />
                            <path d="M58 62l20 1-10 12-16 2z" fill="#f8f8f8" stroke="#888" />
                            <ellipse cx="25" cy="42" rx="24" ry="33" fill="#c8c8cc" stroke="#77777d" stroke-width="2" />
                            <ellipse cx="22" cy="43" rx="19" ry="28" fill="#e4e4e8" stroke="#999" />
                            <path d="M22 38l-6-19c4-3 9-3 13 0zM18 41L5 33c0 7 0 11 2 15zM26 41l14-8c1 6 0 11-2 15zM19 46L9 57c3 5 6 9 10 10zM25 46l10 11c-3 5-6 9-10 10z" fill="#33333b" />
                            <circle cx="22" cy="43" r="3" fill="#222" />
                        </svg>
                        <div class="promo-head">
                            <div>凡亿PCB在线 PCB实战</div>
                            <div class="sub">Cadence Allegro 实战</div>
                        </div>
                        <div class="promo-body">
                            <div>读者QQ群：562010407</div>
                            <div>作者QQ号：451701569</div>
                            <div>微信公众号：EDA-Pcbbar</div>
                            <div>官网：fany-online.com</div>
                        </div>
                    </div>
                </aside>

                <section class="center">
                    <svg class="canvas" viewBox="335 194 1814 1030" preserveAspectRatio="xMidYMid slice">
                        <g class="silk">
                            <path d="M386 592h408v18H386z" /><path d="M386 798h408v18H386z" />
                            <path d="M377 601h18v206h-18z" /><path d="M785 601h18v206h-18z" />
                            <path d="M335 909h725v17H335z" /><path d="M1051 917h17v307h-17z" />
                            <path d="M1086 951h436v12h-436z" /><path d="M1080 957h11v267h-11z" /><path d="M1517 957h11v267h-11z" />
                        </g>
                        <g class="copper">
                            <path d="M421 630h117v147H421zM640 630h116v147H640z" />
                            <circle cx="299" cy="1024" r="80" /><circle cx="590" cy="1024" r="80" />
                            <circle cx="881" cy="1024" r="80" /><circle cx="1303" cy="1158" r="115" />
                        </g>
                        <g class="hole">
                            <circle cx="299" cy="1024" r="46" /><circle cx="590" cy="1024" r="46" />
                            <circle cx="881" cy="1024" r="46" /><circle cx="1303" cy="1158" r="57" />
                        </g>
                        <circle cx="1377" cy="525" r="18" fill="#003800" />
                        <circle cx="1260" cy="572" r="24" fill="#000080" /><circle cx="1391" cy="572" r="24" fill="#000080" />
                        <circle cx="1260" cy="572" r="11" fill="#5458a0" /><circle cx="1391" cy="572" r="11" fill="#5458a0" />
                        <path d="M335 499h1814M1385 194v1030" class="cross" />
                        <rect x="791" y="347" width="1043" height="306" rx="104" class="callout" />
                        <text x="1313" y="522" class="callout-text">走线居中的技巧使用</text>
                    </svg>
                    <div class="dock">
                        <div class="command">
                            <div class="strip">
                                <svg viewBox="0 0 10 10"><path d="M2 2l6 6M8 2L2 8" stroke="#111" stroke-width="2" /></svg>
                                <b class="back"></b>
                                <svg class="turn"><use href="#pin" /></svg>
                                <span>Co</span><i></i>
                            </div>
                            <pre>last pick:  6920.0 7225.0
last pick:  6920.0 7210.0
last pick:  6960.0 7220.0
Command &gt;</pre>
                            <div class="scroll">
                                <button aria-label="Scroll up"><b class="up"></b></button>
                                <span class="thumb"></span>
                                <button aria-label="Scroll down"><b class="down"></b></button>
                            </div>
                        </div>
                        <div class="world">
                            <div class="strip">
                                <svg viewBox="0 0 10 10"><path d="M2 2l6 6M8 2L2 8" stroke="#111" stroke-width="2" /></svg>
                                <b class="back"></b>
                                <svg class="turn"><use href="#pin" /></svg>
                                <span>Wc</span><i></i>
                            </div>
                            <svg class="world-view" viewBox="0 0 332 77">
                                <path d="M125 2h77v11h3q5 1 5 6v47l1 4h-14l-3-3h-28v3h-41l-2-4V7q0-4 2-5z" fill="none" stroke="#3da565" stroke-width="1.5" />
                                <path d="M134 18h7v6h-9v-4" fill="none" stroke="#eee" stroke-width="1.5" />
                                <circle cx="174" cy="4" r="1" fill="#3da565" />
                            </svg>
                        </div>
                    </div>
                </section>

                <aside class="right">
                    <section class="visibility">
                        <div class="panel-head">
                            <span>Visibility</span>
                            <svg><use href="#pin" /></svg><b class="up"></b><svg viewBox="0 0 10 10"><path d="M2 2l6 6M8 2L2 8" stroke="#111" stroke-width="2" /></svg>
                        </div>
                        <div class="views">
                            <label for="views">Views:</label>
                            <span class="combo"><select id="views"><option></option></select></span>
                        </div>
                        <table class="layers">
                            <colgroup><col class="name"><col span="7"></colgroup>
                            <tr><th class="name">Layer</th><th colspan="2">Plan</th><th>Etch</th><th>Via</th><th>Pin</th><th>Drc</th><th>All</th></tr>
                            <tr>
                                <td class="name">Conductors</td><td></td>
                                <td><input type="checkbox" aria-label="Conductors plan"></td>
                                <td><input type="checkbox" aria-label="Conductors etch"></td>
                                <td><input type="checkbox" aria-label="Conductors via"></td>
                                <td><input type="checkbox" aria-label="Conductors pin"></td>
                                <td><input type="checkbox" aria-label="Conductors drc"></td>
                                <td><input type="checkbox" aria-label="Conductors all"></td>
                            </tr>
                            <tr>
                                <td class="name">Planes</td>
                                <td class="near"><input type="checkbox" aria-label="Planes" checked></td><td></td>
                                <td><input type="checkbox" aria-label="Planes etch"></td>
                                <td><input type="checkbox" aria-label="Planes via"></td>
                                <td><input type="checkbox" aria-label="Planes pin"></td>
                                <td><input type="checkbox" aria-label="Planes drc"></td>
                                <td><input type="checkbox" aria-label="Planes all"></td>
                            </tr>
                        </table>
                        <div class="layer-box">
                            <table class="layers">
                                <colgroup><col class="name"><col span="7"></colgroup>
                                <tr>
                                    <td class="name">Top</td><td></td>
                                    <td><i class="swatch green"></i></td><td><i class="swatch red"></i></td><td><i class="swatch blue-fill"></i></td><td><i class="swatch red"></i></td><td><i class="swatch yellow"></i></td>
                                    <td><input type="checkbox" aria-label="Top all" checked></td>
                                </tr>
                                <tr>
                                    <td class="name">Gnd</td><td></td>
                                    <td><i class="swatch"></i></td><td><i class="swatch"></i></td><td><i class="swatch"></i></td><td><i class="swatch"></i></td><td><i class="swatch"></i></td>
                                    <td><input type="checkbox" aria-label="Gnd all"></td>
                                </tr>
                                <tr>
                                    <td class="name">Vcc</td><td></td>
                                    <td><i class="swatch"></i></td><td><i class="swatch"></i></td><td><i class="swatch"></i></td><td><i class="swatch"></i></td><td><i class="swatch"></i></td>
                                    <td><input type="checkbox" aria-label="Vcc all"></td>
                                </tr>
                                <tr>
                                    <td class="name">Bottom</td><td></td>
                                    <td><i class="swatch"></i></td><td><i class="swatch"></i></td><td><i class="swatch"></i></td><td><i class="swatch"></i></td><td><i class="swatch"></i></td>
                                    <td><input type="checkbox" aria-label="Bottom all"></td>
                                </tr>
                                <tr>
                                    <td class="name">All</td><td></td>
                                    <td><i class="swatch"></i></td><td></td><td></td><td></td><td><i class="swatch"></i></td>
                                    <td><input type="checkbox" aria-label="All layers"></td>
                                </tr>
                            </table>
                        </div>
                    </section>
                    <section class="options">
                        <div class="panel-head">
                            <span>Options</span>
                            <svg><use href="#pin" /></svg><b class="up"></b><svg viewBox="0 0 10 10"><path d="M2 2l6 6M8 2L2 8" stroke="#111" stroke-width="2" /></svg>
                        </div>
                        <div class="options-body">
                            <div>Active Class and Subclass:</div>
                            <span class="combo class-pick"><select aria-label="Class"><option>Etch</option></select></span>
                            <div class="subclass">
                                <i class="swatch red"></i>
                                <span class="combo"><i class="chip"></i><select aria-label="Subclass"><option>Top</option></select></span>
                            </div>
                            <div class="mirror">
                                <label><input type="checkbox">Mirror</label>
                                <button class="btn">More options...</button>
                            </div>
                        </div>
                    </section>
                </aside>
            </div>

            <div class="status">
                <span class="idle">Idle</span>
                <span class="busy"></span>
                <span></span>
                <span>Top</span>
                <span>7340.0, 7390.0</span>
                <button>P</button>
                <button>A</button>
                <span>- (null)</span>
                <span></span>
                <span>Placement edit</span>
                <span>Off</span>
                <span class="drc">DRC</span>
                <span>0</span>
            </div>

            <div class="taskbar">
                <button class="start" aria-label="Start"><svg viewBox="0 0 46 46">
                    <circle cx="23" cy="23" r="21" fill="url(#orb)" stroke="#3d5f85" stroke-width="2" />
                    <path d="M13 14c4-3 7-2 9-1l-2 9c-3-1-6-1-9 1z" fill="#e8612c" /><path d="M24 14c4 2 6 2 10 0l-2 9c-4 2-7 1-10 0z" fill="#8ec63f" />
                    <path d="M10 25c3-2 6-2 9-1l-2 9c-3-1-6-1-9 1z" fill="#4aa5e6" /><path d="M21 25c4 2 6 2 10 0l-2 9c-4 2-7 1-10 0z" fill="#fbc834" />
                </svg></button>
                <button class="ie" aria-label="Internet Explorer"><svg viewBox="0 0 44 44">
                    <path d="M39 24H15c1 10 14 11 16 4h8C34 44 7 43 7 23 7 5 38 3 39 24zM15 19h15c-1-8-13-8-15 0z" fill="#37a5e8" stroke="#e8f4fc" />
                    <path d="M10 41c-10 0-4-17 6-26C25 6 37 1 40 5c2 3 0 7-2 10 1-5-1-8-7-5C18 16 7 32 12 37c2 1 4 1 7-1-3 3-6 5-9 5z" fill="#f2c230" stroke="#c99614" />
                </svg></button>
                <button class="task"><svg viewBox="0 0 40 40"><rect width="40" height="40" rx="8" fill="#2a96f5" /><path d="M9 13v15l11-11 11 11V13" fill="none" stroke="#fff" stroke-width="3" /></svg>一起来学Cadenc...</button>
                <button class="task"><svg viewBox="0 0 40 40"><rect width="40" height="40" rx="8" fill="#f5852d" /><path d="M9 14h21v9H12v6" fill="none" stroke="#fff" stroke-width="3" /></svg>课程.pptx - WPS...</button>
                <button class="task active"><svg><use href="#allegro" /></svg>Allegro PCB Des...</button>
                <div class="tray">
                    <svg viewBox="0 0 20 20"><path d="M1 8h18v10H1z" fill="#ddd" stroke="#777" /><path d="M3 11h14M3 14h14" stroke="#777" stroke-dasharray="2 1" /><path d="M9 7l5-3 3-3" stroke="#777" fill="none" /></svg>
                    <svg viewBox="0 0 20 20"><path d="M4 14l6-7 6 7z" fill="#fff" stroke="#567" /></svg>
                    <svg viewBox="0 0 20 20"><path d="M1 4h11v11H1z" fill="#ddd" stroke="#111" stroke-width="2" /><path d="M12 8l6-4v11l-6-4z" fill="#888" stroke="#111" /><circle cx="6" cy="9" r="3" fill="#8cb89a" stroke="#222" /></svg>
                    <div class="clock">15:33<br>2016/11/16</div>
                    <span class="peek"></span>
                </div>
            </div>
        </div>

        <div class="zoom-note">2387 x 1343 (124%)</div>
        <button class="upload">
            <span><svg viewBox="0 0 32 32"><g fill="none" stroke="#fff" stroke-width="4"><circle cx="16" cy="10" r="6" /><circle cx="9" cy="22" r="6" /><circle cx="23" cy="22" r="6" /><path d="M13 26l7-8" /></g></svg></span>
            拖拽至此上传
        </button>
        <button class="side" aria-label="播放列表"><svg viewBox="0 0 12 24"><path d="M11 2L1 12l10 10" fill="none" stroke="#888" stroke-width="2" /></svg></button>
    </main>

    <footer class="controls">
        <input type="range" class="seek" aria-label="进度" max="2690" value="1044">
        <div class="control-row">
            <div class="time">00:01:44 /&nbsp; 00:04:29</div>
            <div class="play">
                <button aria-label="停止" class="stop"><svg viewBox="0 0 24 24"><rect x="1" y="1" width="22" height="22" rx="2" /></svg></button>
                <button aria-label="上一个"><svg viewBox="0 0 24 24"><path d="M1 1h3v22H1zM23 1v22L5 12z" /></svg></button>
                <button aria-label="暂停" class="pause"><svg viewBox="0 0 26 34"><rect x="1" y="1" width="6" height="32" rx="2" /><rect x="19" y="1" width="6" height="32" rx="2" /></svg></button>
                <button aria-label="下一个"><svg viewBox="0 0 24 24"><path d="M20 1h3v22h-3zM1 1v22l18-11z" /></svg></button>
                <button aria-label="静音" class="mute"><svg viewBox="0 0 26 24"><path d="M1 7h4l8-6v22l-8-6H1z" /><path d="M17 8c2 2 2 6 0 8M21 5c4 4 4 10 0 14" fill="none" stroke="#fff" stroke-width="2" /></svg></button>
                <input type="range" class="volume" aria-label="音量" value="100">
            </div>
            <div class="extras">
                <button aria-label="投屏"><svg viewBox="0 0 30 30"><path d="M9 24H2V3h26v21h-7" /><path d="M9 27l6-6 6 6z" class="solid" /><path d="M8 9h6M11 9v8M17 9l3 8 3-8" /></svg></button>
                <button class="speed">倍速</button>
                <button aria-label="工具箱"><svg viewBox="0 0 30 30"><path d="M2 8h26v19H2zM9 8V3h12v5M2 16h26M13 13h4v6h-4z" /><circle cx="27" cy="3" r="4" class="dot" /></svg></button>
                <button aria-label="设置"><svg viewBox="0 0 30 30"><path d="M12 2h6l2 4 5-1 3 6-3 4 3 4-3 6-5-1-2 4h-6l-2-4-5 1-3-6 3-4-3-4 3-6 5 1z" /><circle cx="15" cy="15" r="5" /></svg></button>
                <button aria-label="全屏"><svg viewBox="0 0 30 30"><path d="M4 11V4h7M19 4h7v7M26 4l-7 7M26 19v7h-7M4 19v7h7M4 26l7-7" /></svg></button>
            </div>
        </div>
    </footer>

</body>

</html>
```
FILE: styles.css
```css
* {
    box-sizing: border-box;
}

body {
    margin: 0;
    height: 100vh;
    display: flex;
    flex-direction: column;
    overflow: hidden;
    background: #000;
    font-family: "Liberation Sans", "Noto Sans CJK SC", sans-serif;
    font-size: 13px;
    color: #111;
}

button {
    font: inherit;
    color: inherit;
    padding: 0;
    border: 0;
    background: none;
}

svg {
    display: block;
    flex: none;
}

.defs {
    position: absolute;
    width: 0;
    height: 0;
}

/* player title bar */
.player-bar {
    flex: none;
    height: 50px;
    padding: 0 9px 10px 0;
    display: flex;
    align-items: center;
    background: #262626;
    font-family: "Noto Sans", "Noto Sans CJK SC", sans-serif;
    font-size: 20px;
}

.player-left {
    display: flex;
    align-items: center;
    gap: 20px;
}

.avatar {
    width: 40px;
    height: 40px;
}

.login {
    width: 69px;
    height: 33px;
    border-radius: 4px;
    background: #474747;
    color: #fff;
    font-size: 19px;
    line-height: 30px;
}

.player-title {
    flex: 1;
    text-align: center;
    color: #999;
}

.player-tools {
    display: flex;
    align-items: center;
}

.player-tools button {
    width: 42px;
    display: flex;
    justify-content: center;
}

.player-tools .game {
    width: 48px;
}

.player-tools button:not(.game) svg {
    width: 26px;
    height: 26px;
    fill: none;
    stroke: #999;
    stroke-width: 2;
}

.divider {
    width: 2px;
    height: 18px;
    margin: 0 7px;
    background: #555;
}

/* recorded desktop */
.video {
    flex: 1;
    min-height: 0;
    position: relative;
    display: flex;
    padding: 0 78px 0 70px;
}

.desktop {
    flex: 1;
    min-width: 0;
    display: flex;
    flex-direction: column;
    background: #f5f3f7;
}

.app-title {
    height: 24px;
    position: relative;
    display: flex;
    align-items: center;
    gap: 5px;
    background: linear-gradient(90deg, #96b3d8, #a2bde2 40%, #b4cfe9);
    font-family: "Noto Sans", sans-serif;
    font-size: 16px;
    line-height: 22px;
}

.app-icon {
    width: 20px;
    height: 22px;
}

.mdi {
    margin-left: auto;
    padding-right: 2px;
    display: flex;
    gap: 4px;
}

.mdi button {
    width: 22px;
    height: 21px;
    padding: 1px;
    background: #f0eef0;
    border: 2px solid;
    border-color: #fff #777 #777 #fff;
}

.watermark {
    position: absolute;
    left: 41.6%;
    top: 0;
    z-index: 1;
    color: #f01d10;
    font: 500 25px/34px "Noto Sans CJK SC", sans-serif;
    white-space: nowrap;
}

.menu {
    height: 31px;
    padding: 0 6px;
    display: flex;
    align-items: center;
    gap: 18px;
    border-bottom: 5px solid #c71a0b;
    font-family: "Noto Sans", sans-serif;
    font-size: 15px;
}

.menu a {
    color: #444;
    text-decoration: none;
}

.brand {
    margin-left: auto;
    color: #222;
    font-size: 24px;
    font-weight: bold;
}

/* tool bars */
.toolbar {
    display: flex;
    height: 41px;
    border-bottom: 1px solid #ddd;
}

.toolbar + .toolbar {
    height: 47px;
    border-bottom: 3px solid #999;
}

.group {
    display: flex;
    align-items: center;
    padding: 0 10px 0 3px;
    border-right: 1px dotted #999;
    background: linear-gradient(#e6e4e6, #bcbabc);
}

.group:last-child {
    border-radius: 0 4px 4px 0;
}

.group:first-child {
    padding-left: 2px;
}

.grip {
    width: 4px;
    height: 28px;
    background: repeating-linear-gradient(#3f96e4 0 4px, transparent 4px 6px);
}

.group button {
    width: 38px;
    display: flex;
    justify-content: center;
}

.group button:nth-child(odd) {
    width: 39px;
}

.group .drop {
    width: 17px;
}

.group svg {
    width: 28px;
    height: 28px;
    overflow: visible;
    fill: none;
}

.group .drop svg {
    width: 14px;
}

.blue svg {
    fill: url(#blue);
    stroke: #4b6396;
    stroke-width: 2;
}

.blue .pale {
    fill: #d9e1f3;
    stroke-width: 1;
}

.blue .line {
    fill: none;
}

.blue .dash {
    stroke-dasharray: 3 2;
}

.group text {
    fill: #222;
    stroke: none;
    font-family: "Liberation Sans", sans-serif;
    font-weight: bold;
}

.group .tiny {
    font-size: 9px;
}

.group .light {
    fill: #fff;
}

.group .red {
    fill: #b8302a;
}

.group .num {
    font-size: 12px;
}

.group .abc {
    fill: #666;
    font-size: 13px;
    font-weight: normal;
}

.group .ask {
    fill: #33507f;
    font-size: 15px;
}

.group .t3d {
    fill: #d9ebfb;
    stroke: #4179ad;
    font-size: 20px;
}

/* docked panels */
.workspace {
    flex: 1;
    min-height: 0;
    display: grid;
    grid-template-columns: 256px minmax(0, 1fr) 300px;
    gap: 8px;
}

.left,
.right,
.center {
    min-height: 0;
    display: flex;
    flex-direction: column;
}

.panel-head {
    height: 19px;
    margin-right: 3px;
    padding: 0 4px 3px 2px;
    display: flex;
    align-items: center;
    gap: 11px;
    background: linear-gradient(#e2e0e2, #b9b7b9);
    font-family: "Noto Sans", sans-serif;
}

.panel-head span {
    flex: 1;
    padding-left: 5px;
    border-left: 4px dotted #4a97dc;
    line-height: 14px;
}

.panel-head svg {
    width: 10px;
    height: 12px;
}

.up,
.down {
    border: 4px solid transparent;
    border-bottom: 5px solid #111;
    border-top: 0;
}

.down {
    border-top: 5px solid #111;
    border-bottom: 0;
}

.dim {
    border-top-color: #888;
}

fieldset {
    margin: 0 14px 0 8px;
    border: 1px solid #999;
    border-radius: 0;
    min-width: 0;
}

legend {
    padding: 0 3px;
    line-height: 16px;
}

.filter {
    margin-top: 10px;
    padding: 4px 8px 1px;
}

.filter-buttons {
    display: flex;
    gap: 13px;
}

.btn {
    min-width: 56px;
    height: 20px;
    border: 1px solid;
    border-color: #fff #777 #777 #fff;
    box-shadow: 1px 1px #999;
    background: #f5f3f7;
}

.btn.focus {
    min-width: 62px;
    border: 2px solid #777;
    box-shadow: none;
}

.checks {
    height: 247px;
    margin-top: 4px;
    display: grid;
    grid-template-columns: 104px 1fr;
    grid-auto-rows: 1fr;
}

label {
    display: flex;
    align-items: center;
    gap: 8px;
    white-space: nowrap;
}

.off {
    color: #aaa;
}

input[type="checkbox"] {
    appearance: none;
    flex: none;
    width: 15px;
    height: 15px;
    margin: 0;
    border: 2px solid;
    border-color: #848484 #e6e4e8 #e6e4e8 #848484;
    background: #fff;
}

input[type="checkbox"]:disabled {
    background: #f5f3f7;
}

input[type="checkbox"]:checked {
    background: #fff url('data:image/svg+xml,<svg xmlns="http://www.w3.org/2000/svg" viewBox="0 0 11 11"><path d="M1 4l3 4 6-7" fill="none" stroke="black" stroke-width="2.5"/></svg>');
}

.by-name {
    margin-top: 9px;
    padding: 3px 5px 9px 8px;
    display: grid;
    grid-template-columns: 150px 62px;
    gap: 4px 7px;
}

.combo {
    position: relative;
    display: flex;
    height: 25px;
    border: 2px solid;
    border-color: #777 #ddd #ddd #777;
    background: #fff;
}

.combo select {
    appearance: none;
    width: 100%;
    padding: 0 18px 0 2px;
    border: 0;
    border-radius: 0;
    background: none;
    font: inherit;
    color: inherit;
}

.combo::before {
    content: "";
    position: absolute;
    top: 0;
    right: 0;
    bottom: 0;
    width: 20px;
    border: 1px solid;
    border-color: #fff #777 #777 #fff;
    background: #f5f3f7;
}

.combo::after {
    content: "";
    position: absolute;
    right: 6px;
    top: 8px;
    border: 5px solid transparent;
    border-top-color: #111;
    border-bottom: 0;
}

.name-field {
    gap: 10px;
}

.name-field input {
    flex: 1;
    min-width: 0;
    height: 24px;
    border: 2px solid;
    border-color: #777 #ddd #ddd #777;
}

.by-name .btn {
    height: 27px;
}

.promo {
    position: relative;
    height: 200px;
    margin: auto 0 2px;
    background: #fff;
    font-family: "Noto Sans CJK SC", sans-serif;
    font-weight: bold;
}

.reel {
    position: absolute;
    left: 0;
    top: 9px;
    width: 80px;
    height: 78px;
}

.promo-head {
    height: 61px;
    padding: 8px 8px 0 54px;
    background: #ff1a00;
    color: #fff;
    font-size: 19px;
    line-height: 25px;
    text-align: center;
    white-space: nowrap;
}

.promo-head .sub {
    font-size: 17px;
    line-height: 20px;
}

.promo-body {
    padding: 23px 0 0 17px;
    color: #e0200f;
    font-size: 19px;
    line-height: 25px;
    white-space: nowrap;
}

.canvas {
    flex: 1;
    min-height: 0;
    width: 100%;
    border: 1px solid #888;
    background: #000;
}

.silk {
    fill: #fff;
    fill-opacity: 0.48;
}

.copper {
    fill: #5a0900;
}

.hole {
    fill: #80574f;
}

.cross {
    stroke: #e2e2e6;
    stroke-width: 1;
    shape-rendering: crispEdges;
}

.callout {
    fill: none;
    stroke: #ed1c24;
    stroke-width: 2;
}

.callout-text {
    fill: #ed1c24;
    stroke: #ed1c24;
    stroke-width: 1;
    font: 53px "Noto Serif CJK SC", "Noto Sans CJK SC", serif;
    text-anchor: middle;
}

.dock {
    display: flex;
    gap: 8px;
    height: 85px;
    margin: 8px 0 5px;
}

.command,
.world {
    display: flex;
    border: 1px solid #888;
    background: #f5f3f7;
}

.command {
    flex: 1;
    padding-bottom: 7px;
}

.strip {
    width: 21px;
    margin-bottom: 2px;
    padding: 5px 0 0;
    display: flex;
    flex-direction: column;
    align-items: center;
    gap: 6px;
    background: linear-gradient(90deg, #e2e0e2, #b9b7b9);
}

.command .strip {
    margin-bottom: -6px;
}

.strip svg {
    width: 11px;
    height: 11px;
}

.strip .turn {
    transform: rotate(90deg);
}

.strip span {
    height: 15px;
    font-size: 13px;
    line-height: 13px;
    writing-mode: vertical-rl;
    transform: rotate(180deg);
}

.strip i {
    width: 10px;
    height: 4px;
    flex: none;
    background: linear-gradient(90deg, #4a97dc 4px, transparent 4px 6px, #4a97dc 6px);
}

.back {
    border: 4px solid transparent;
    border-right: 5px solid #111;
    border-left: 0;
}

pre {
    flex: 1;
    margin: 0;
    padding: 2px;
    border: 1px solid #888;
    border-top: 0;
    background: #fff;
    font: 13px/16px "Liberation Sans", sans-serif;
}

.scroll {
    width: 21px;
    display: flex;
    flex-direction: column;
}

.scroll button {
    height: 20px;
    display: flex;
    align-items: center;
    justify-content: center;
    border: 1px solid #888;
}

.thumb {
    margin-top: auto;
    height: 10px;
    border: 1px solid #aaa;
}

.world {
    width: 360px;
}

.world-view {
    flex: 1;
    min-width: 0;
    margin: 2px 2px 3px 3px;
    background: #000;
}

.right {
    border-left: 2px solid #999;
}

.visibility {
    height: 500px;
    display: flex;
    flex-direction: column;
    border-right: 1px solid #888;
}

.views {
    margin-top: 17px;
    display: flex;
    align-items: center;
    gap: 15px;
}

.views .combo {
    width: 194px;
}

.layers {
    margin-top: 3px;
    width: 248px;
    table-layout: fixed;
    border-collapse: collapse;
}

.layers col {
    width: 26px;
}

.layers td,
.layers th {
    height: 27px;
    padding: 0;
    text-align: center;
}

.layers th {
    font-weight: normal;
    text-decoration: underline;
}

.layers .name {
    width: 66px;
    text-align: left;
    white-space: nowrap;
}

.layers .near {
    text-align: left;
}

.layers input {
    vertical-align: middle;
}

.layer-box {
    flex: 1;
    margin-top: 5px;
    border: 1px solid #888;
    border-right: 0;
}

.layer-box .layers {
    margin-top: 2px;
}

.swatch {
    display: inline-block;
    width: 15px;
    height: 16px;
    border: 2px solid #8f8f8f;
    outline: 1px solid #ddd;
    outline-offset: -3px;
    background: #000;
    vertical-align: middle;
}

.swatch.green {
    background: #1bd91b;
}

.swatch.red {
    background: #b01400;
}

.swatch.blue-fill {
    background: #0a0aff;
}

.swatch.yellow {
    background: #fff000;
}

.options {
    margin-top: 6px;
    border-top: 1px solid #888;
    border-right: 1px solid #888;
}

.options .panel-head {
    height: 23px;
}

.options-body {
    padding: 24px 47px 0 9px;
}

.class-pick {
    margin: 8px 20px 0 35px;
}

.subclass {
    margin: 15px 20px 0 10px;
    display: flex;
    align-items: center;
    gap: 10px;
}

.subclass .combo {
    flex: 1;
    height: 29px;
}

.chip {
    flex: none;
    width: 14px;
    margin: 4px;
    border: 1px solid #333;
    background: #b01400;
}

.mirror {
    margin-top: 53px;
    display: flex;
    justify-content: space-between;
}

.mirror .btn {
    width: 108px;
    height: 27px;
}

/* status line and task bar */
.status {
    height: 22px;
    display: grid;
    grid-template-columns: minmax(0, 1fr) 65px 166px 153px 165px 21px 22px 127px 52px 152px 89px 66px 52px;
    gap: 1px;
    border-top: 2px solid #888;
    border-bottom: 1px solid #777;
    line-height: 18px;
    text-align: center;
}

.status span {
    border-left: 1px solid #888;
}

.status .idle {
    border: 0;
    text-align: left;
}

.status button {
    border: 1px solid #888;
    line-height: 15px;
}

.status .busy {
    background: #00d600;
}

.status .drc {
    background: #ff1a00;
    color: #8c1200;
}

.taskbar {
    height: 48px;
    display: flex;
    background: #8094ae;
    color: #fff;
    font-family: "Noto Sans", "Noto Sans CJK SC", sans-serif;
    font-size: 15px;
}

.start svg {
    width: 46px;
    height: 46px;
    margin-left: 8px;
}

.ie svg {
    width: 44px;
    height: 42px;
    margin: 0 18px 0 32px;
}

.task {
    width: 198px;
    margin-right: 4px;
    padding-left: 11px;
    display: flex;
    align-items: center;
    gap: 5px;
    border: 1px solid #55677f;
    border-radius: 3px;
    box-shadow: inset 0 0 0 1px #b8c4d4;
    background: linear-gradient(170deg, #a9b7c9, #8d9fb7 50%, #8094ae 55%);
    white-space: nowrap;
}

.task.active {
    background: linear-gradient(170deg, #cfd8e4, #bcc7d6 50%, #aab8ca 55%);
}

.task svg {
    width: 40px;
    height: 40px;
}

.tray {
    margin-left: auto;
    display: flex;
    align-items: center;
    gap: 12px;
}

.tray svg {
    width: 20px;
    height: 20px;
}

.clock {
    line-height: 22px;
    text-align: center;
}

.peek {
    align-self: stretch;
    width: 16px;
    border: 1px solid #9fb0c6;
    background: linear-gradient(#8a9cb2, #5d7088);
}

/* player overlays */
.zoom-note {
    position: absolute;
    left: 30px;
    top: 51px;
    color: #ffd800;
    font: 21px/28px "Noto Sans", sans-serif;
    text-shadow: 1px 1px #000, -1px -1px #000, 1px -1px #000, -1px 1px #000;
}

.upload {
    position: absolute;
    top: -3px;
    right: 129px;
    z-index: 2;
    width: 194px;
    height: 56px;
    display: flex;
    align-items: center;
    gap: 10px;
    border: 1px solid #5596fa;
    border-radius: 9px;
    overflow: hidden;
    background: #f2f8ff;
    color: #559dfa;
    font: bold 20px "Noto Sans CJK SC", sans-serif;
    white-space: nowrap;
}

.upload span {
    width: 54px;
    height: 56px;
    display: grid;
    place-items: center;
    border-radius: 0 8px 8px 0;
    background: linear-gradient(20deg, #6ab4fb, #5594fa 60%);
}

.upload svg {
    width: 32px;
    height: 32px;
}

.side {
    position: absolute;
    right: 0;
    top: 597px;
    width: 29px;
    height: 149px;
    padding-left: 8px;
    display: grid;
    place-items: center;
    border-radius: 4px 0 0 4px;
    background: #151515;
}

.side svg {
    width: 12px;
    height: 24px;
}

/* player controls */
.controls {
    flex: none;
    height: 92px;
    padding-top: 9px;
}

input[type="range"] {
    appearance: none;
    display: block;
    height: 24px;
    margin: 0;
    background: linear-gradient(#3296ff, #3296ff) center / 100% 6px no-repeat;
}

.seek {
    width: 100%;
}

.controls .seek {
    background: linear-gradient(90deg, #3296ff 39%, #4c4c4c 39%) center / 100% 6px no-repeat;
}

input[type="range"]::-webkit-slider-thumb {
    appearance: none;
    width: 24px;
    height: 24px;
    border: 5px solid #0b4a92;
    border-radius: 50%;
    background: #fff;
}

.control-row {
    height: 32px;
    margin-top: 28px;
    padding: 0 26px 0 14px;
    display: flex;
    align-items: center;
    justify-content: space-between;
    color: #999;
    font: 19px "Noto Sans", "Noto Sans CJK SC", sans-serif;
}

.play {
    margin-left: 8px;
    display: flex;
    align-items: center;
    gap: 53px;
}

.play svg {
    width: 24px;
    height: 24px;
    fill: #fff;
}

.play .stop {
    margin-right: -5px;
}

.play .pause svg {
    width: 26px;
    height: 34px;
}

.play .mute svg {
    width: 28px;
}

.play .volume {
    width: 102px;
    margin-left: -45px;
}

.volume::-webkit-slider-thumb {
    width: 16px !important;
    height: 16px !important;
    border-width: 4px !important;
}

.extras {
    display: flex;
    align-items: center;
    gap: 24px;
}

.extras svg {
    width: 30px;
    height: 30px;
    overflow: visible;
    fill: none;
    stroke: #999;
    stroke-width: 2;
}

.extras .solid {
    fill: #999;
}

.extras .dot {
    fill: #ff4040;
    stroke: none;
}

.speed {
    width: 66px;
    height: 30px;
    margin: 0 -3px;
    border: 2px solid #666;
    border-radius: 15px;
    line-height: 26px;
}
```
